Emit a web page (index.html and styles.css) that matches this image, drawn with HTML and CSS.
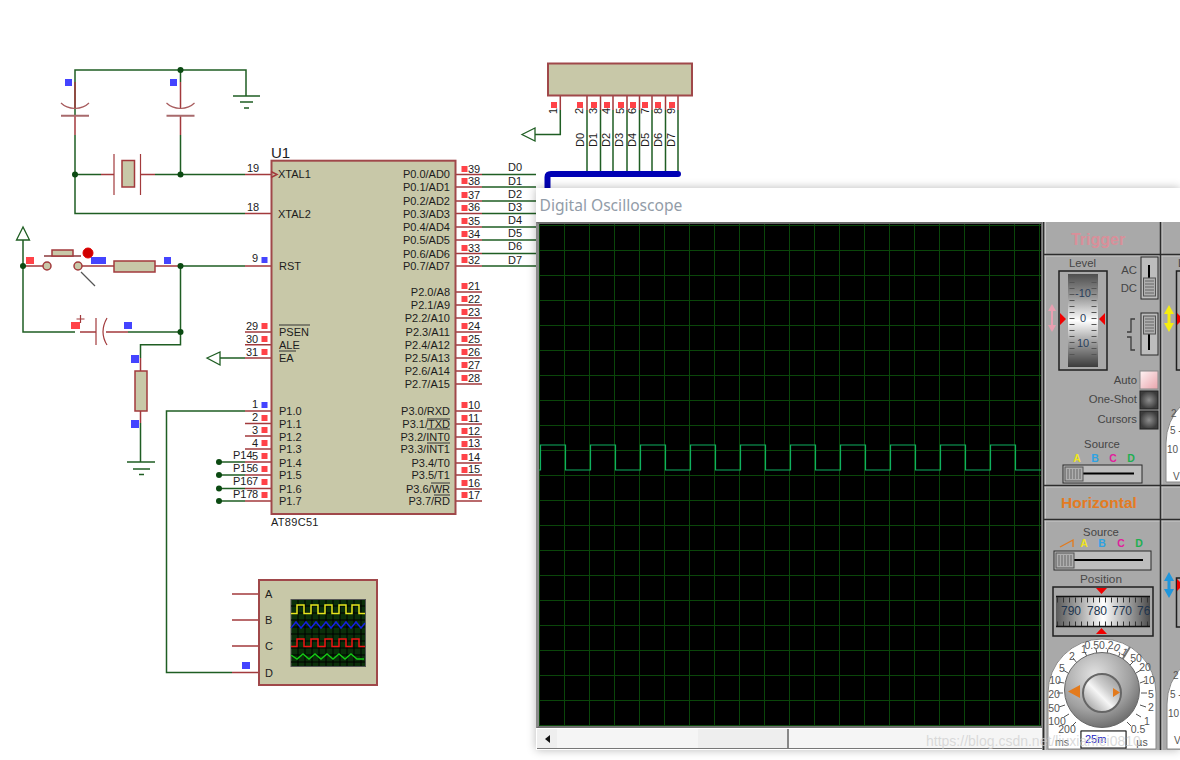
FILE: index.html
```html
<!DOCTYPE html>
<html lang="en">
<head>
<meta charset="utf-8">
<title>Proteus schematic with Digital Oscilloscope</title>
<link rel="stylesheet" href="styles.css">
</head>
<body>
<main class="desktop">
<svg class="schematic" viewBox="0 0 1180 760" width="1180" height="760" aria-label="AT89C51 schematic">
  <!-- green wires -->
  <path class="wire" d="M75 116V70H246V96M180.5 70V82M180.5 135V174.5M75 135V213.5H245M75 174.5H101M155 174.5H245M23 240V332H75M180.5 266H245M180.5 266V344.7H140.5V358M180.5 332H128M140.5 423V462M220 358H245M245 411H166.5V672.5H232M219 462H245M219 475H245M219 488.5H245M219 501H245M23 266H26"/>
  <path class="wire" d="M482 174.5H536M482 187H536M482 201H536M482 213.5H536M482 227H536M482 240H536M482 253.5H536M482 266H536"/>
  <path class="wire" d="M587 110V174M600.5 110V174M613 110V174M627 110V174M639.5 110V174M652 110V174M665.5 110V174M678 110V174M560.3 110V134.5H535"/>
  <!-- maroon pins -->
  <path class="pin" d="M75 82V108M180.5 82V108M75 116V135M180.5 116V135M101 174.5H114M140.5 174.5H155M245 174.5H271M245 213.5H271M23 266H43M82 266H114M155 266H180M245 266H271M80 332H96M106 332H128M245 332H271M245 344.7H271M245 358H271M245 411H271M245 423.5H271M245 436H271M245 449H271M245 462H271M245 475H271M245 488.5H271M245 501H271M140.5 358V371M140.5 411V423M232 594H259M232 620H259M232 646H259M232 672.5H259"/>
  <path class="pin" d="M456 174.5H482M456 187H482M456 201H482M456 213.5H482M456 227H482M456 240H482M456 253.5H482M456 266H482M456 292H482M456 305H482M456 318H482M456 332H482M456 345H482M456 358H482M456 371H482M456 384H482M456 411H482M456 424H482M456 437H482M456 449H482M456 463H482M456 475H482M456 489H482M456 501H482"/>
  <path class="pin" d="M560.3 96V110M587 96V110M600.5 96V110M613 96V110M627 96V110M639.5 96V110M652 96V110M665.5 96V110M678 96V110"/>
  <!-- capacitors -->
  <path class="plate" d="M61 115.7H89M166.5 115.7H194.5"/>
  <path class="cap-curve" d="M61 103Q66 108 75 108.5Q84 108 89 103M166.5 103Q171.5 108 180.5 108.5Q189.500 108 194.5 103"/>
  <path class="thin" d="M114 154V195M140.5 154V195M96 318V345M107 318Q99 332 107 345"/>
  <rect class="body" x="122" y="160.5" width="12.5" height="26.5"/>
  <path class="thin" d="M76.5 319H84.5M80.5 315V323"/>
  <!-- ground + power -->
  <path class="earth" d="M233 96H260M240 102H253M244 108H249M127 462H155M133 469H150M139 474.5H144"/>
  <path class="arrow" d="M23 227L16.5 240H29.5ZM207 358L220 352V365ZM522 134.5L535 128V141Z"/>
  <!-- switch & resistors -->
  <path class="plate" d="M44 256H81"/>
  <rect class="body" x="52" y="250" width="21" height="6"/>
  <circle class="body" cx="47" cy="266" r="4"/>
  <circle class="body" cx="78" cy="266" r="4"/>
  <path class="knife" d="M81 272L95 286"/>
  <circle class="probe" cx="88" cy="253" r="5"/>
  <rect class="body" x="114" y="261" width="41" height="11"/>
  <rect class="body" x="135" y="371" width="12" height="40"/>
  <!-- junctions -->
  <g class="dots">
    <circle cx="180.5" cy="70" r="3"/><circle cx="75" cy="174.5" r="3"/><circle cx="180.5" cy="174.5" r="3"/>
    <circle cx="23" cy="266" r="3"/><circle cx="180.5" cy="266" r="3"/><circle cx="180.5" cy="332" r="3"/>
    <circle cx="219" cy="462" r="3"/><circle cx="219" cy="475" r="3"/><circle cx="219" cy="488.5" r="3"/><circle cx="219" cy="501" r="3"/>
  </g>
  <!-- chip -->
  <rect class="chip" x="271.5" y="160.7" width="184" height="353.3"/>
  <path class="pin" d="M271 171.5L277 174.5L271 177.5"/>
  <path class="thin dark" d="M279 325H310M279 351H296M427 419H450M427 429H450M427 443H450M431 483H450M434 495H450"/>
  <!-- connector -->
  <rect class="chip" x="548" y="63.5" width="144" height="32"/>
  <path class="bus" d="M547.5 190V177Q547.5 174 551 174H678"/>
  <!-- oscilloscope symbol -->
  <rect class="chip" x="259" y="580" width="118" height="105"/>
  <rect class="mini" x="291" y="599.5" width="74.5" height="67"/>
  <path class="mini-grid" d="M298 600V666M305 600V666M312 600V666M319 600V666M326 600V666M333 600V666M340 600V666M347 600V666M354 600V666M361 600V666M291 606H365M291 613H365M291 620H365M291 627H365M291 634H365M291 641H365M291 648H365M291 655H365M291 662H365"/>
  <path class="t-y" d="M291 613.5H297V605H304V613.5H311V605H318V613.5H325V605H332V613.5H339V605H346V613.5H352V605H359V613.5H365"/>
  <path class="t-b" d="M291 628L296 622L301 628L306 622L311 628L316 622L321 628L326 622L331 628L336 622L341 628L346 622L351 628L356 622L361 628L365 623"/>
  <path class="t-r" d="M291 646.5H297V639H304V646.5H311V639H318V646.5H325V639H332V646.5H339V639H346V646.5H352V639H359V646.5H365"/>
  <path class="t-g" d="M291 655L297 659L303 654L309 659L315 654L321 659L327 654L333 659L339 654L345 659L351 654L357 659L364 659"/>
  <g class="label">
    <text x="278" y="178">XTAL1</text><text x="278" y="218">XTAL2</text><text x="279" y="270">RST</text>
    <text x="279" y="336">PSEN</text><text x="279" y="349">ALE</text><text x="279" y="362">EA</text>
    <text x="279" y="415">P1.0</text><text x="279" y="428">P1.1</text><text x="279" y="441">P1.2</text><text x="279" y="453">P1.3</text>
    <text x="279" y="467">P1.4</text><text x="279" y="479">P1.5</text><text x="279" y="493">P1.6</text><text x="279" y="505">P1.7</text>
    <text class="part" x="271" y="526">AT89C51</text>
    <text x="247" y="172">19</text><text x="247" y="211">18</text><text x="252" y="262">9</text>
    <text x="246" y="330">29</text><text x="246" y="343">30</text><text x="246" y="356">31</text>
    <text x="252" y="408">1</text><text x="252" y="421">2</text><text x="252" y="434">3</text><text x="252" y="447">4</text>
    <text x="233" y="459">P14</text><text x="252" y="460">5</text>
    <text x="233" y="472">P15</text><text x="252" y="472">6</text>
    <text x="233" y="485">P16</text><text x="252" y="485">7</text>
    <text x="233" y="498">P17</text><text x="252" y="498">8</text>
    <text x="508" y="171">D0</text><text x="508" y="185">D1</text><text x="508" y="198">D2</text><text x="508" y="211">D3</text>
    <text x="508" y="224">D4</text><text x="508" y="237">D5</text><text x="508" y="250">D6</text><text x="508" y="264">D7</text>
    <text x="468" y="172.5">39</text><text x="468" y="185">38</text><text x="468" y="198.5">37</text><text x="468" y="211">36</text>
    <text x="468" y="225">35</text><text x="468" y="238">34</text><text x="468" y="251.5">33</text><text x="468" y="264">32</text>
    <text x="468" y="290">21</text><text x="468" y="303">22</text><text x="468" y="316">23</text><text x="468" y="330">24</text>
    <text x="468" y="343">25</text><text x="468" y="356">26</text><text x="468" y="369">27</text><text x="468" y="382">28</text>
    <text x="468" y="409">10</text><text x="468" y="422">11</text><text x="468" y="435">12</text><text x="468" y="447">13</text>
    <text x="468" y="461">14</text><text x="468" y="473">15</text><text x="468" y="487">16</text><text x="468" y="499">17</text>
    <text class="title-u" x="271" y="158">U1</text>
    <text x="265" y="598">A</text><text x="265" y="624">B</text><text x="265" y="650">C</text><text x="265" y="676.5">D</text>
  </g>
  <g class="label end">
    <text x="450" y="178">P0.0/AD0</text><text x="450" y="191">P0.1/AD1</text><text x="450" y="205">P0.2/AD2</text><text x="450" y="218">P0.3/AD3</text>
    <text x="450" y="231">P0.4/AD4</text><text x="450" y="244">P0.5/AD5</text><text x="450" y="258">P0.6/AD6</text><text x="450" y="270">P0.7/AD7</text>
    <text x="450" y="296">P2.0/A8</text><text x="450" y="309">P2.1/A9</text><text x="450" y="322">P2.2/A10</text><text x="450" y="336">P2.3/A11</text>
    <text x="450" y="349">P2.4/A12</text><text x="450" y="362">P2.5/A13</text><text x="450" y="375">P2.6/A14</text><text x="450" y="388">P2.7/A15</text>
    <text x="450" y="415">P3.0/RXD</text><text x="450" y="428">P3.1/TXD</text><text x="450" y="441">P3.2/INT0</text><text x="450" y="453">P3.3/INT1</text>
    <text x="450" y="467">P3.4/T0</text><text x="450" y="479">P3.5/T1</text><text x="450" y="493">P3.6/WR</text><text x="450" y="505">P3.7/RD</text>
  </g>
  <g class="label vertical">
    <text transform="translate(557 114) rotate(-90)">1</text><text transform="translate(583 114) rotate(-90)">2</text>
    <text transform="translate(597 114) rotate(-90)">3</text><text transform="translate(610 114) rotate(-90)">4</text>
    <text transform="translate(624 114) rotate(-90)">5</text><text transform="translate(636 114) rotate(-90)">6</text>
    <text transform="translate(649 114) rotate(-90)">7</text><text transform="translate(662 114) rotate(-90)">8</text>
    <text transform="translate(675 114) rotate(-90)">9</text>
    <text transform="translate(584 147) rotate(-90)">D0</text><text transform="translate(597 147) rotate(-90)">D1</text>
    <text transform="translate(610 147) rotate(-90)">D2</text><text transform="translate(623 147) rotate(-90)">D3</text>
    <text transform="translate(636 147) rotate(-90)">D4</text><text transform="translate(649 147) rotate(-90)">D5</text>
    <text transform="translate(662 147) rotate(-90)">D6</text><text transform="translate(675 147) rotate(-90)">D7</text>
  </g>
  <!-- test squares -->
  <path class="sq-red" d="M551 102h6v6h-6zM577 102h6v6h-6zM591 102h6v6h-6zM604 102h6v6h-6zM618 102h6v6h-6zM630 102h6v6h-6zM642 102h6v6h-6zM655 102h6v6h-6zM669 102h6v6h-6zM26 257h8v7h-8zM71 322h9v7h-9z"/>
  <path class="sq-red" d="M261.5 323h6v6h-6zM261.5 336h6v6h-6zM261.5 349h6v6h-6zM261.5 415h6v6h-6zM261.5 427h6v6h-6zM261.5 440h6v6h-6zM261.5 453h6v6h-6zM261.5 466h6v6h-6zM261.5 479h6v6h-6zM261.5 492h6v6h-6z"/>
  <path class="sq-red" d="M461.5 166h6v6h-6zM461.5 178h6v6h-6zM461.5 192h6v6h-6zM461.5 205h6v6h-6zM461.5 218h6v6h-6zM461.5 231h6v6h-6zM461.5 245h6v6h-6zM461.5 257h6v6h-6zM461.5 283h6v6h-6zM461.5 296h6v6h-6zM461.5 309h6v6h-6zM461.5 323h6v6h-6zM461.5 336h6v6h-6zM461.5 349h6v6h-6zM461.5 362h6v6h-6zM461.5 375h6v6h-6zM461.5 402h6v6h-6zM461.5 415h6v6h-6zM461.5 428h6v6h-6zM461.5 441h6v6h-6zM461.5 454h6v6h-6zM461.5 467h6v6h-6zM461.5 480h6v6h-6zM461.5 492h6v6h-6z"/>
  <path class="sq-blue" d="M65 79h7v7h-7zM170 79h7v7h-7zM91 257h15v7h-15zM164 257h7v7h-7zM261.5 257h6v6h-6zM124 322h8v7h-8zM131 355h8v8h-8zM131 420h8v8h-8zM261.5 402h6v6h-6zM242 662h8v7h-8z"/>
</svg>

<section class="scope-window" aria-label="Digital Oscilloscope">
  <header class="scope-title">Digital Oscilloscope</header>
  <div class="scope-body">
    <div class="scope-left">
      <div class="screen">
        <svg class="trace" viewBox="539 224 502 502" width="502" height="502" aria-hidden="true">
          <path d="M539 470H540.5V445H565.5V470H590.5V445H615.5V470H640.5V445H665.5V470H690.5V445H715.5V470H740.5V445H765.5V470H790.5V445H815.5V470H840.5V445H865.5V470H890.5V445H915.5V470H940.5V445H965.5V470H990.5V445H1015.5V470H1041"/>
        </svg>
      </div>
      <div class="scrollbar">
        <div class="scroll-btn"><span class="scroll-arrow"></span></div>
        <div class="scroll-track"><div class="scroll-thumb"></div></div>
      </div>
    </div>
    <svg class="panel" viewBox="1042 222 138 528" width="138" height="528" aria-label="Oscilloscope controls">
      <defs>
        <linearGradient id="drumV" x1="0" y1="0" x2="0" y2="1">
          <stop offset="0" stop-color="#4e4e4e"/><stop offset=".25" stop-color="#999"/><stop offset=".5" stop-color="#fff"/><stop offset=".75" stop-color="#999"/><stop offset="1" stop-color="#3c3c3c"/>
        </linearGradient>
        <linearGradient id="drumH" x1="0" y1="0" x2="1" y2="0">
          <stop offset="0" stop-color="#5a5a5a"/><stop offset=".25" stop-color="#a8a8a8"/><stop offset=".5" stop-color="#fff"/><stop offset=".75" stop-color="#a8a8a8"/><stop offset="1" stop-color="#4c4c4c"/>
        </linearGradient>
        <radialGradient id="btnDark"><stop offset="0" stop-color="#8e8e8e"/><stop offset="1" stop-color="#3c3c3c"/></radialGradient>
        <linearGradient id="btnPink" x1="0" y1="0" x2="1" y2="1"><stop offset="0" stop-color="#fff4f4"/><stop offset="1" stop-color="#e8a4ac"/></linearGradient>
        <radialGradient id="knob" cx=".4" cy=".3" r=".8"><stop offset="0" stop-color="#e2e2e2"/><stop offset=".6" stop-color="#a0a0a0"/><stop offset="1" stop-color="#5c5c5c"/></radialGradient>
        <linearGradient id="cap" x1="0" y1="1" x2="1" y2="0"><stop offset="0" stop-color="#888"/><stop offset=".45" stop-color="#f6f6f6"/><stop offset=".6" stop-color="#cfcfcf"/><stop offset="1" stop-color="#8a8a8a"/></linearGradient>
      </defs>
      <!-- dividers -->
      <path class="bevel-l" d="M1045.5 222V750M1162 222V750M1044 256H1180M1044 487H1180M1044 521H1180"/>
      <path class="bevel-d" d="M1043.5 222V750M1160.5 222V750M1044 254.5H1180M1044 485.5H1180M1044 519.5H1180"/>
      <text class="head pink" x="1098" y="245">Trigger</text>
      <text class="head orange" x="1099" y="508">Horizontal</text>

      <!-- trigger level -->
      <text class="pl mid" x="1082.5" y="267">Level</text>
      <rect class="frame" x="1059" y="271" width="48" height="99"/>
      <rect class="drum-v" x="1068" y="274" width="30" height="93"/>
      <path class="ticks" d="M1072 276V366M1094 276V366"/>
      <text class="drum-t" x="1083" y="297">-10</text><text class="drum-t" x="1083" y="322">0</text><text class="drum-t" x="1083" y="347">10</text>
      <path class="red" d="M1060 313L1066 319L1060 325ZM1105 313L1099 319L1105 325Z"/>
      <path class="pink-a" d="M1052 304L1056 311H1053V325H1056L1052 332L1048 325H1051V311H1048Z"/>
      <text class="pl end" x="1137" y="274">AC</text><text class="pl end" x="1137" y="292">DC</text>

      <rect class="sw" x="1141" y="257" width="17" height="42"/>
      <path class="slot" d="M1149 265V280"/>
      <rect class="handle" x="1143.5" y="278" width="12" height="18"/>
      <path class="ridge" d="M1145 281H1154M1145 284H1154M1145 287H1154M1145 290H1154M1145 293H1154"/>
      <rect class="sw" x="1141" y="313" width="17" height="42"/>
      <path class="slot" d="M1149 334V350"/>
      <rect class="handle" x="1143.5" y="316" width="12" height="18"/>
      <path class="ridge" d="M1145 319H1154M1145 322H1154M1145 325H1154M1145 328H1154M1145 331H1154"/>
      <path class="edge" d="M1127 332H1131V319H1135M1127 337H1131V350H1135"/>

      <text class="pl end" x="1137" y="384">Auto</text><text class="pl end" x="1137" y="403">One-Shot</text><text class="pl end" x="1137" y="423">Cursors</text>
      <rect class="btn-p" x="1140" y="371" width="18" height="18"/>
      <rect class="btn-d" x="1140" y="391" width="18" height="18"/>
      <rect class="btn-d" x="1140" y="411" width="18" height="18"/>

      <text class="pl mid" x="1102" y="448">Source</text>
      <text class="src ya" x="1077" y="462">A</text><text class="src bl" x="1095" y="462">B</text><text class="src mg" x="1113" y="462">C</text><text class="src gr" x="1131" y="462">D</text>
      <rect class="sld" x="1063" y="465" width="79" height="18"/>
      <path class="slot" d="M1083 473.5H1134"/>
      <rect class="handle" x="1065" y="467" width="18" height="14"/>
      <path class="ridge" d="M1068 469V479M1071 469V479M1074 469V479M1077 469V479M1080 469V479"/>

      <!-- horizontal -->
      <text class="pl mid" x="1101" y="536">Source</text>
      <path class="ramp" d="M1060 547L1073 540V547"/>
      <text class="src ya" x="1084" y="547">A</text><text class="src bl" x="1102" y="547">B</text><text class="src mg" x="1121" y="547">C</text><text class="src gr" x="1139" y="547">D</text>
      <rect class="sld" x="1054" y="551" width="97" height="19"/>
      <path class="slot" d="M1074 560H1143"/>
      <rect class="handle" x="1056" y="553" width="18" height="15"/>
      <path class="ridge" d="M1059 555V566M1062 555V566M1065 555V566M1068 555V566M1071 555V566"/>

      <text class="pl mid pos" x="1101" y="583">Position</text>
      <rect class="frame" x="1053" y="587" width="100" height="49"/>
      <rect class="drum-h" x="1056" y="596" width="94" height="31"/>
      <path class="ticks-h" d="M1057 600H1150M1057 624H1150"/>
      <path class="bar" d="M1056 596.5H1150M1056 626.5H1150"/>
      <svg x="1056" y="596" width="94" height="31" viewBox="1056 596 94 31">
        <text class="drum-n" x="1071" y="615">790</text><text class="drum-n" x="1097" y="615">780</text><text class="drum-n" x="1122" y="615">770</text><text class="drum-n" x="1147" y="615">760</text>
      </svg>
      <path class="red" d="M1096 588H1107L1101.5 594ZM1096 634H1107L1101.5 628Z"/>

      <!-- time dial -->
      <path class="dial" d="M1048 749V693A54 54 0 0 1 1156 693V749H1126V731H1081V749Z"/>
      <path class="divider" d="M1122 660L1130 647"/>
      <path class="dial-t" d="M1076 722L1072 726M1069 714L1064 717M1065 705L1059 707M1063 693H1057M1064 683L1058 682M1068 673L1063 670M1077 663L1073 658M1087 657L1085 652M1097 654L1096 649M1107 654L1108 649M1118 658L1120 653M1129 666L1133 662M1136 673L1141 670M1140 683L1145 681M1141 693H1147M1140 705L1146 707M1136 714L1141 717M1127 722L1131 726"/>
      <g class="dial-l">
        <text x="1067" y="733">200</text><text x="1057" y="725">100</text><text x="1054" y="712">50</text><text x="1054" y="698">20</text><text x="1055" y="684">10</text><text x="1062" y="672">5</text><text x="1072" y="660">2</text><text x="1084" y="653">1</text><text x="1099" y="649">0.50.2</text>
        <text transform="translate(1119 653) rotate(30)">0.1</text>
        <text x="1136" y="662">50</text><text x="1145" y="671">20</text><text x="1149" y="684">10</text><text x="1151" y="698">5</text><text x="1151" y="711">2</text><text x="1147" y="725">1</text><text x="1138" y="733">0.5</text>
        <text x="1062" y="746">ms</text><text x="1142" y="746">µs</text>
      </g>
      <circle class="knob" cx="1102" cy="690" r="37.5"/>
      <circle class="knob-cap" cx="1102" cy="693" r="19"/>
      <path class="orange-a" d="M1080 685V698L1068 691.5ZM1113 688L1120 692.5L1113 697Z"/>
      <rect class="readout" x="1081" y="731" width="45" height="17"/>
      <text class="read-t" x="1085" y="743">25m</text>

      <!-- channel column, clipped by the window edge -->
      <text class="pl" x="1178" y="267">Level</text>
      <rect class="frame" x="1176.5" y="271" width="20" height="99"/>
      <path class="yellow-a" d="M1169 305L1174 314H1170.5V323H1174L1169 332L1164 323H1167.5V314H1164Z"/>
      <path class="red" d="M1177 313L1180 316V322L1177 325Z"/>
      <path class="dial" d="M1166 482V443A54 54 0 0 1 1220 389V482Z"/>
      <path class="dial" d="M1167 749V704A54 54 0 0 1 1221 650V749Z"/>
      <g class="dial-l start">
        <text x="1171" y="417">2</text><text x="1170" y="434">5 -</text><text x="1167" y="453">10</text><text x="1173" y="480">V</text>
        <text x="1173" y="679">2</text><text x="1170" y="698">5 -</text><text x="1168" y="717">10</text><text x="1174" y="744">V</text>
      </g>
      <rect class="frame" x="1176.5" y="578" width="20" height="49"/>
      <path class="blue-a" d="M1169 572L1174 581H1170.5V589H1174L1169 598L1164 589H1167.5V581H1164Z"/>
      <path class="red" d="M1177 579L1180 582V588L1177 591Z"/>
    </svg>
  </div>
</section>
<div class="watermark">https://blog.csdn.net/liuxianfei0810</div>
</main>
</body>
</html>
```

FILE: styles.css
```css
html, body { margin: 0; padding: 0; background: #fff; overflow: hidden; }
.desktop { position: relative; width: 1180px; height: 760px; overflow: hidden; background: #fff; }
.schematic { display: block; }

.wire, .pin, .thin, .earth, .arrow, .plate, .cap-curve, .knife, .bus { fill: none; }
.wire { stroke: #1f5e23; stroke-width: 1.5; }
.pin { stroke: #a23a3c; stroke-width: 1.5; fill: none; }
.plate { stroke: #a86a6c; stroke-width: 2; }
.cap-curve { stroke: #a85c5e; stroke-width: 1.2; }
.thin { stroke: #a23a3c; stroke-width: 1.2; }
.thin.dark { stroke: #333; stroke-width: 1; }
.earth { stroke: #1f5e23; stroke-width: 1.5; }
.arrow { stroke: #1f5e23; stroke-width: 1.3; }
.knife { stroke: #555; stroke-width: 1.2; }
.body { fill: #c8c8a8; stroke: #a23a3c; stroke-width: 1.5; }
.chip { fill: #c8c8a8; stroke: #a0484a; stroke-width: 2; }
.probe { fill: #d00000; stroke: #e00000; }
.dots circle { fill: #0b4a12; }
.bus { stroke: #0000b4; stroke-width: 6; stroke-linecap: round; }
.sq-red { fill: #ff4248; }
.sq-blue { fill: #4444ff; }
.mini { fill: #0a2f0a; stroke: #555; stroke-width: 1; }
.mini-grid { stroke: #000; stroke-width: 1; }
.t-y, .t-b, .t-r, .t-g { fill: none; stroke-width: 1.5; }
.t-y { stroke: #e6e61e; }
.t-b { stroke: #1420e0; }
.t-r { stroke: #f01414; }
.t-g { stroke: #14c814; }

.label text { font: 11px "Liberation Sans", Arial, sans-serif; fill: #1c1c1c; }
.label.end text { text-anchor: end; }
.label .title-u { font-size: 15px; }
.label .part { letter-spacing: .3px; }

.scope-window {
  position: absolute; left: 536px; top: 188px; width: 644px; height: 562px;
  display: flex; flex-direction: column; background: #fff;
  box-shadow: 0 0 9px rgba(0, 0, 0, .28);
}
.scope-title {
  height: 34px; flex: none; padding-left: 3.5px; background: #fff; color: #929ca8;
  font: 15.6px/34px "Noto Sans", "Open Sans", sans-serif; white-space: nowrap;
}
.scope-body { flex: 1; display: flex; min-height: 0; }
.scope-left { width: 506px; flex: none; display: flex; flex-direction: column; }
.screen {
  width: 502px; height: 502px; border: solid #6e6e6e; border-width: 2px 1px 2px 0; border-left: 3px solid #8a8a8a;
  background-color: #000;
  background-image:
    linear-gradient(#0a460a 1px, transparent 1px),
    linear-gradient(90deg, #0a460a 1px, transparent 1px);
  background-size: 25px 25px;
  background-position: 0 1px;
}
.trace { display: block; }
.trace path { fill: none; stroke: #0fb060; stroke-width: 1.2; }
.scrollbar {
  height: 19px; margin-top: 1px; display: flex; background: #f5f5f5;
  border-bottom: 1.5px solid #777; margin-left: 1px;
}
.scroll-btn { width: 20px; flex: none; display: flex; align-items: center; justify-content: center; background: #eee; }
.scroll-arrow { width: 0; height: 0; border: 4.5px solid transparent; border-right: 5px solid #111; border-left: 0; }
.scroll-track { flex: 1; }
.scroll-thumb { width: 89px; height: 100%; margin-left: 141px; background: #eee; border-right: 2px solid #888; }

.panel { display: block; flex: none; background: #a9a9a9; }
.bevel-l { stroke: #c9c9c9; stroke-width: 1; fill: none; }
.bevel-d { stroke: #2c2c2c; stroke-width: 1.5; fill: none; }
.head { font: bold 16px "Liberation Sans", Arial, sans-serif; text-anchor: middle; }
.head.pink { fill: #d98f99; }
.head.orange { fill: #e47b22; font-size: 15.5px; }
.pl { font: 11.3px "Liberation Sans", Arial, sans-serif; fill: #454545; }
.pl.mid { text-anchor: middle; }
.pl.end { text-anchor: end; }
.pl.pos { fill: #4a4a4a; font-size: 11.8px; }
.frame { fill: #a9a9a9; stroke: #1f1f1f; stroke-width: 1.5; }
.drum-v { fill: url(#drumV); }
.drum-h { fill: url(#drumH); }
.ticks { stroke: #555; stroke-width: 5; stroke-dasharray: 1 5; fill: none; }
.ticks-h { stroke: #333; stroke-width: 5; stroke-dasharray: 1 5; fill: none; }
.bar { stroke: #111; stroke-width: 1.5; fill: none; }
.drum-t { font: 11px "Liberation Sans", Arial, sans-serif; fill: #2a3f5c; text-anchor: middle; }
.drum-n { font: 12px "Liberation Sans", Arial, sans-serif; fill: #20344e; text-anchor: middle; }
.red { fill: #f00000; }
.pink-a { fill: #e79fb0; }
.yellow-a { fill: #f5ee10; }
.blue-a { fill: #1f96dc; }
.orange-a { fill: #e37a1c; }
.sw, .sld { fill: #bdbdbd; stroke: #2a2a2a; stroke-width: 1; }
.slot { stroke: #000; stroke-width: 2; fill: none; }
.handle { fill: #aeaeae; stroke: #555; stroke-width: 1; }
.ridge { stroke: #666; stroke-width: 1; fill: none; }
.edge { stroke: #3c3c3c; stroke-width: 1.3; fill: none; }
.btn-p { fill: url(#btnPink); stroke: #888; stroke-width: 1; }
.btn-d { fill: url(#btnDark); stroke: #222; stroke-width: 1; }
.src { font: bold 10.5px "Liberation Sans", Arial, sans-serif; text-anchor: middle; }
.ya { fill: #efe41c; }
.bl { fill: #2ea2e2; }
.mg { fill: #e0209c; }
.gr { fill: #1eaf50; }
.ramp { stroke: #e37a1c; stroke-width: 1.3; fill: none; }
.dial { fill: #fff; stroke: #888; stroke-width: 1; }
.divider { stroke: #777; stroke-width: 2; fill: none; }
.dial-t { stroke: #555; stroke-width: 1; fill: none; }
.dial-l text { font: 10.5px "Liberation Sans", Arial, sans-serif; fill: #555; text-anchor: middle; }
.dial-l.start text { text-anchor: start; font-size: 10px; }
.knob { fill: url(#knob); stroke: #666; stroke-width: 1; }
.knob-cap { fill: url(#cap); stroke: #666; stroke-width: 2; }
.readout { fill: #fff; stroke: #111; stroke-width: 1; }
.read-t { font: 11px "Liberation Sans", Arial, sans-serif; fill: #2020c0; }

.watermark {
  position: absolute; left: 926px; top: 732px; font: 14px/18px "Liberation Sans", Arial, sans-serif;
  color: rgba(205, 205, 205, .72); white-space: nowrap;
}
```
